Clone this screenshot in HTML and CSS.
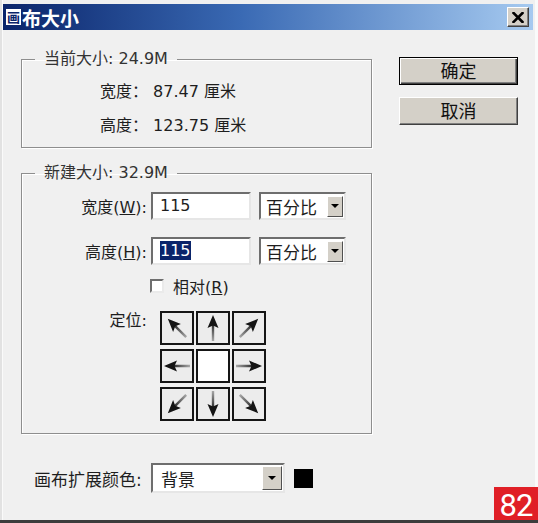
FILE: index.html
```html
<!DOCTYPE html>
<html lang="zh-CN">
<head>
<meta charset="utf-8">
<title>画布大小</title>
<link rel="stylesheet" href="styles.css">
</head>
<body>
<div class="window">
  <div class="titlebar">
    <span class="ticon">画</span><span class="ttext">布大小</span>
    <span class="close"><svg width="12" height="11" viewBox="0 0 12 11"><path d="M1.5 1 L10.5 10 M10.5 1 L1.5 10" stroke="#000" stroke-width="2.6" stroke-linecap="square"/></svg></span>
  </div>
  <div class="main">
    <div class="groups">
      <fieldset class="group g1">
        <legend>当前大小: 24.9M</legend>
        <div class="info">宽度： 87.47 厘米</div>
        <div class="info">高度： 123.75 厘米</div>
      </fieldset>
      <fieldset class="group g2">
        <legend>新建大小: 32.9M</legend>
        <div class="frow">
          <span class="flabel">宽度(<u>W</u>):</span>
          <div class="field">115</div>
          <div class="combo"><span class="ctext">百分比</span><span class="drop"></span></div>
        </div>
        <div class="frow">
          <span class="flabel">高度(<u>H</u>):</span>
          <div class="field"><span class="sel">115</span></div>
          <div class="combo"><span class="ctext">百分比</span><span class="drop"></span></div>
        </div>
        <div class="crow"><span class="check"></span><span>相对(<u>R</u>)</span></div>
        <div class="arow">
          <span class="alabel">定位:</span>
          <div class="anchor">
            <div class="cell"><svg class="arr r-nw" viewBox="0 0 30 30"><defs><linearGradient id="a1" gradientUnits="userSpaceOnUse" x1="0" y1="28" x2="0" y2="10"><stop offset="0" stop-color="#a8a8a8"/><stop offset="1" stop-color="#222"/></linearGradient></defs><line x1="15" y1="28" x2="15" y2="12" stroke="url(#a1)" stroke-width="2.4"/><polygon points="15,2 9.5,15 15,12.5 20.5,15" fill="#141414"/></svg></div>
            <div class="cell"><svg class="arr" viewBox="0 0 30 30"><defs><linearGradient id="a2" gradientUnits="userSpaceOnUse" x1="0" y1="28" x2="0" y2="10"><stop offset="0" stop-color="#a8a8a8"/><stop offset="1" stop-color="#222"/></linearGradient></defs><line x1="15" y1="28" x2="15" y2="12" stroke="url(#a2)" stroke-width="2.4"/><polygon points="15,2 9.5,15 15,12.5 20.5,15" fill="#141414"/></svg></div>
            <div class="cell"><svg class="arr r-ne" viewBox="0 0 30 30"><defs><linearGradient id="a3" gradientUnits="userSpaceOnUse" x1="0" y1="28" x2="0" y2="10"><stop offset="0" stop-color="#a8a8a8"/><stop offset="1" stop-color="#222"/></linearGradient></defs><line x1="15" y1="28" x2="15" y2="12" stroke="url(#a3)" stroke-width="2.4"/><polygon points="15,2 9.5,15 15,12.5 20.5,15" fill="#141414"/></svg></div>
            <div class="cell"><svg class="arr r-w" viewBox="0 0 30 30"><defs><linearGradient id="a4" gradientUnits="userSpaceOnUse" x1="0" y1="28" x2="0" y2="10"><stop offset="0" stop-color="#a8a8a8"/><stop offset="1" stop-color="#222"/></linearGradient></defs><line x1="15" y1="28" x2="15" y2="12" stroke="url(#a4)" stroke-width="2.4"/><polygon points="15,2 9.5,15 15,12.5 20.5,15" fill="#141414"/></svg></div>
            <div class="cell center"></div>
            <div class="cell"><svg class="arr r-e" viewBox="0 0 30 30"><defs><linearGradient id="a5" gradientUnits="userSpaceOnUse" x1="0" y1="28" x2="0" y2="10"><stop offset="0" stop-color="#a8a8a8"/><stop offset="1" stop-color="#222"/></linearGradient></defs><line x1="15" y1="28" x2="15" y2="12" stroke="url(#a5)" stroke-width="2.4"/><polygon points="15,2 9.5,15 15,12.5 20.5,15" fill="#141414"/></svg></div>
            <div class="cell"><svg class="arr r-sw" viewBox="0 0 30 30"><defs><linearGradient id="a6" gradientUnits="userSpaceOnUse" x1="0" y1="28" x2="0" y2="10"><stop offset="0" stop-color="#a8a8a8"/><stop offset="1" stop-color="#222"/></linearGradient></defs><line x1="15" y1="28" x2="15" y2="12" stroke="url(#a6)" stroke-width="2.4"/><polygon points="15,2 9.5,15 15,12.5 20.5,15" fill="#141414"/></svg></div>
            <div class="cell"><svg class="arr r-s" viewBox="0 0 30 30"><defs><linearGradient id="a7" gradientUnits="userSpaceOnUse" x1="0" y1="28" x2="0" y2="10"><stop offset="0" stop-color="#a8a8a8"/><stop offset="1" stop-color="#222"/></linearGradient></defs><line x1="15" y1="28" x2="15" y2="12" stroke="url(#a7)" stroke-width="2.4"/><polygon points="15,2 9.5,15 15,12.5 20.5,15" fill="#141414"/></svg></div>
            <div class="cell"><svg class="arr r-se" viewBox="0 0 30 30"><defs><linearGradient id="a8" gradientUnits="userSpaceOnUse" x1="0" y1="28" x2="0" y2="10"><stop offset="0" stop-color="#a8a8a8"/><stop offset="1" stop-color="#222"/></linearGradient></defs><line x1="15" y1="28" x2="15" y2="12" stroke="url(#a8)" stroke-width="2.4"/><polygon points="15,2 9.5,15 15,12.5 20.5,15" fill="#141414"/></svg></div>
          </div>
        </div>
      </fieldset>
    </div>
    <div class="buttons">
      <div class="btn default">确定</div>
      <div class="btn">取消</div>
    </div>
  </div>
  <div class="extrow">
    <span class="elabel">画布扩展颜色:</span>
    <div class="combo wide"><span class="ctext">背景</span><span class="drop"></span></div>
    <span class="swatch"></span>
  </div>
  <div class="badge">82</div>
</div>
</body>
</html>
```

FILE: styles.css
```css
html, body {
  margin: 0;
  padding: 0;
}
body {
  background: #f0f0f0;
  font-family: "DejaVu Sans", "Noto Sans CJK SC", sans-serif;
  font-size: 16px;
  color: #1e1e1e;
}
.window {
  position: relative;
  width: 538px;
  height: 523px;
  box-sizing: border-box;
  padding-top: 4px;
  border-bottom: 3px solid #3c3c3c;
  box-shadow: inset 2px 0 0 #e2e2e2, inset 3px 0 0 #fafafa, inset -3px 0 0 #fafafa;
  overflow: hidden;
}
.titlebar {
  height: 26px;
  margin: 0 5px 0 3px;
  padding-left: 3px;
  background: linear-gradient(to right, #0a246a, #3a6ab4 45%, #a6caf0);
  display: flex;
  align-items: center;
}
.ticon {
  display: inline-block;
  width: 15px;
  height: 16px;
  background: #fff;
  color: #0a246a;
  font: bold 13px/16px "Noto Sans CJK SC", sans-serif;
  text-align: center;
}
.ttext {
  color: #fff;
  font: bold 19px/1 "Noto Sans CJK SC", sans-serif;
  margin-left: 1px;
}
.close {
  margin-left: auto;
  margin-right: 4px;
  width: 22px;
  height: 20px;
  box-sizing: border-box;
  background: #d4d0c8;
  border: 1px solid;
  border-color: #fff #404040 #404040 #fff;
  box-shadow: inset -1px -1px 0 #808080;
  display: flex;
  align-items: center;
  justify-content: center;
}
.main {
  display: flex;
  gap: 27px;
  margin-top: 19px;
  padding-left: 21px;
}
.groups {
  width: 351px;
}
.group {
  margin: 0;
  min-inline-size: 0;
  width: 351px;
  box-sizing: border-box;
  border: 1px solid #8e8e8e;
  box-shadow: 1px 1px 0 #fff, inset 1px 1px 0 #fff;
}
.group legend {
  margin-left: 13px;
  padding: 0 9px;
  height: 20px;
  line-height: 20px;
  color: #333;
}
.g1 {
  padding: 6px 0 4px;
}
.g2 {
  margin-top: 15px;
  padding: 9px 0 12px;
}
.info {
  line-height: 34px;
  padding-left: 78px;
  white-space: nowrap;
}
.frow {
  display: flex;
  align-items: center;
  height: 28px;
}
.frow + .frow {
  margin-top: 17px;
}
.flabel {
  width: 129px;
  padding-right: 4px;
  box-sizing: border-box;
  text-align: right;
  white-space: nowrap;
}
.field {
  width: 100px;
  height: 28px;
  box-sizing: border-box;
  background: #fff;
  border: 2px solid;
  border-color: #6e6e6e #e6e6e6 #e6e6e6 #6e6e6e;
  padding-left: 7px;
  line-height: 24px;
}
.sel {
  background: #0a246a;
  color: #fff;
}
.combo {
  margin-left: 8px;
  width: 87px;
  height: 28px;
  box-sizing: border-box;
  background: #fff;
  border: 2px solid;
  border-color: #6e6e6e #e6e6e6 #e6e6e6 #6e6e6e;
  padding: 0 1px 0 5px;
  display: flex;
  align-items: center;
  font-family: "Noto Sans CJK SC", sans-serif;
  font-size: 17px;
}
.drop {
  margin-left: auto;
  width: 16px;
  height: 21px;
  box-sizing: border-box;
  background: #d4d0c8;
  border: 1px solid;
  border-color: #fff #505050 #505050 #fff;
  display: flex;
  align-items: center;
  justify-content: center;
}
.drop::after {
  content: "";
  width: 0;
  height: 0;
  border-left: 4px solid transparent;
  border-right: 4px solid transparent;
  border-top: 4px solid #000;
}
.crow {
  display: flex;
  align-items: center;
  height: 20px;
  margin-top: 11px;
  padding-left: 128px;
}
.check {
  width: 14px;
  height: 14px;
  box-sizing: border-box;
  background: #fff;
  border: 2px solid;
  border-color: #6e6e6e #eaeaea #eaeaea #6e6e6e;
  margin-right: 9px;
}
.arow {
  display: flex;
  margin-top: 15px;
}
.alabel {
  width: 138px;
  padding-right: 13px;
  box-sizing: border-box;
  text-align: right;
  line-height: 20px;
}
.anchor {
  display: grid;
  grid-template-columns: repeat(3, 34px);
  grid-template-rows: repeat(3, 34px);
  column-gap: 2px;
  row-gap: 4px;
}
.cell {
  box-sizing: border-box;
  border: 2px solid #151515;
  background: #ececec;
}
.cell.center {
  background: #fff;
}
.arr {
  display: block;
  width: 30px;
  height: 30px;
}
.r-nw { transform: rotate(-45deg); }
.r-ne { transform: rotate(45deg); }
.r-e  { transform: rotate(90deg); }
.r-se { transform: rotate(135deg); }
.r-s  { transform: rotate(180deg); }
.r-sw { transform: rotate(-135deg); }
.r-w  { transform: rotate(-90deg); }
.buttons {
  width: 119px;
  padding-top: 8px;
  display: flex;
  flex-direction: column;
  gap: 12px;
}
.btn {
  height: 28px;
  box-sizing: border-box;
  background: #d4d0c8;
  border: 1px solid;
  border-color: #fff #404040 #404040 #fff;
  box-shadow: inset -1px -1px 0 #808080;
  text-align: center;
  font: 18px/25px "Noto Sans CJK SC", sans-serif;
  color: #111;
}
.btn.default {
  border-color: #000;
  box-shadow: inset 1px 1px 0 #fff, inset -1px -1px 0 #404040, inset -2px -2px 0 #808080;
}
.extrow {
  display: flex;
  align-items: center;
  height: 30px;
  margin-top: 29px;
  padding-left: 34px;
}
.elabel {
  width: 117px;
  white-space: nowrap;
  font-size: 17px;
}
.combo.wide {
  margin-left: 0;
  width: 134px;
  height: 30px;
  padding-left: 8px;
}
.combo.wide .drop {
  width: 20px;
  height: 24px;
}
.swatch {
  width: 19px;
  height: 19px;
  background: #000;
  margin-left: 9px;
}
.badge {
  position: absolute;
  right: 0;
  bottom: -3px;
  width: 44px;
  height: 36px;
  background: #e01f26;
  color: #fff;
  font: 31px/37px Roboto, "Liberation Sans", sans-serif;
  text-align: center;
  letter-spacing: -1px;
}
```
